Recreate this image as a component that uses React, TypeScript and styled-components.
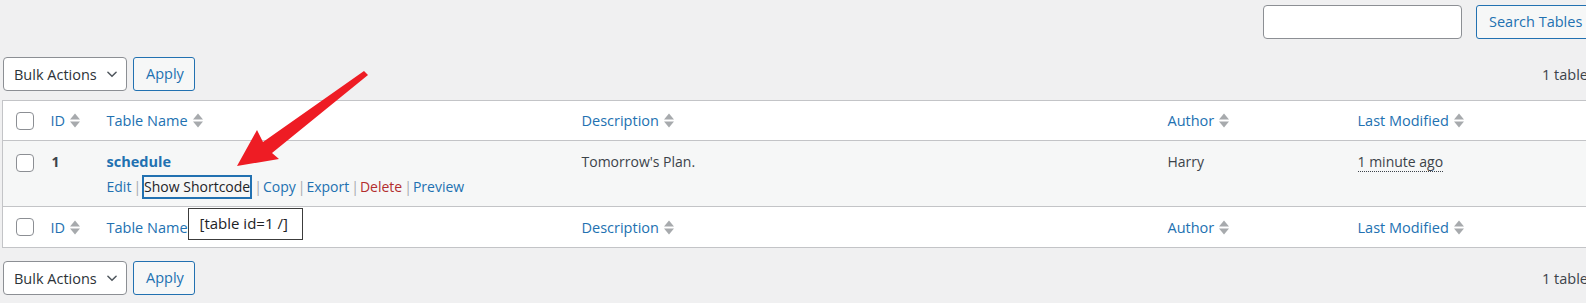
import React from "react";
import styled, { createGlobalStyle } from "styled-components";

const Global = createGlobalStyle`
  html, body { margin: 0; padding: 0; background: #f0f0f1; overflow: hidden; }
  body { font-family: "Open Sans", "Noto Sans", sans-serif; font-size: 14px; color: #3c434a; }
  * { box-sizing: border-box; }
`;

const Page = styled.div`
  position: relative;
  width: 1600px;
  padding: 5px 0 0 2px;
`;

const SearchBar = styled.div`
  display: flex;
  justify-content: flex-end;
  align-items: center;
  gap: 14px;
  height: 34px;
`;

const SearchInput = styled.div`
  width: 199px;
  height: 34px;
  background: #fff;
  border: 1px solid #8c8f94;
  border-radius: 4px;
`;

const Button = styled.button<{ $w?: number }>`
  height: 34px;
  width: ${(p) => (p.$w ? `${p.$w}px` : "auto")};
  padding: 0 12px;
  background: #f6f7f7;
  border: 1px solid #2271b1;
  border-radius: 3px;
  color: #2271b1;
  font-family: inherit;
  font-size: 14.5px;
  line-height: 32px;
  white-space: nowrap;
  text-align: left;
`;

const Nav = styled.div<{ $top: number }>`
  display: flex;
  align-items: center;
  gap: 6px;
  height: 34px;
  margin-top: ${(p) => p.$top}px;
  padding-left: 1px;
`;

const Select = styled.div`
  display: flex;
  align-items: center;
  justify-content: space-between;
  width: 124px;
  height: 34px;
  padding: 0 7px 0 10px;
  background: #fff;
  border: 1px solid #8c8f94;
  border-radius: 4px;
  color: #2c3338;
  font-size: 14.5px;
`;

const Count = styled.span`
  margin-left: auto;
  padding-right: 12px;
  color: #3c434a;
  font-size: 14.5px;
`;

const Table = styled.table`
  width: 1598px;
  margin-top: 9px;
  border-collapse: collapse;
  table-layout: fixed;
  border: 1px solid #c3c4c7;
`;

const HeadRow = styled.tr<{ $h: number }>`
  background: #fff;
  height: ${(p) => p.$h}px;
  border-bottom: 1px solid #c3c4c7;
`;

const BodyRow = styled.tr`
  background: #f6f7f7;
  height: 66px;
  border-bottom: 1px solid #c3c4c7;
`;

const Th = styled.th<{ $pl?: number }>`
  padding: 0 0 0 ${(p) => p.$pl ?? 10}px;
  text-align: left;
  font-weight: 400;
  font-size: 14.5px;
  vertical-align: middle;
`;

const Td = styled.td<{ $pl?: number }>`
  padding: 10px 0 0 ${(p) => p.$pl ?? 10}px;
  vertical-align: top;
  line-height: 22px;
`;

const Checkbox = styled.span<{ $mt?: number }>`
  display: block;
  width: 18px;
  height: 18px;
  margin-top: ${(p) => p.$mt ?? 0}px;
  background: #fff;
  border: 1px solid #8c8f94;
  border-radius: 4px;
`;

const SortLink = styled.span`
  display: inline-flex;
  align-items: center;
  gap: 5px;
  color: #2271b1;
`;

const Id = styled.strong`
  display: block;
  color: #3c434a;
  font-weight: 700;
  padding-left: 1px;
`;

const Title = styled.strong`
  display: block;
  color: #2271b1;
  font-weight: 700;
  font-size: 14.5px;
`;

const Actions = styled.div`
  position: relative;
  display: flex;
  align-items: center;
  margin-top: 2px;
  white-space: nowrap;
`;

const Act = styled.span<{ $danger?: boolean }>`
  color: ${(p) => (p.$danger ? "#b32d2e" : "#2271b1")};
`;

const FocusAct = styled.span`
  display: inline-block;
  height: 24px;
  line-height: 20px;
  padding: 0;
  border: 2px solid #2271b1;
  color: #1d2327;
`;

const Sep = styled.span`
  color: #a7aaad;
  padding: 0 1px 0 2px;
`;

const Abbr = styled.span`
  border-bottom: 1px dotted #3c434a;
  line-height: 18px;
  display: inline-block;
`;

const Tooltip = styled.div`
  position: absolute;
  left: 81px;
  top: 33px;
  width: 115px;
  height: 32px;
  padding: 0 0 0 11px;
  background: #fff;
  border: 1px solid #3c3c3c;
  color: #1d2327;
  font-size: 15px;
  line-height: 29px;
  z-index: 2;
`;

const ArrowLayer = styled.svg`
  position: absolute;
  left: 0;
  top: 0;
  pointer-events: none;
  z-index: 3;
`;

const SortIcon = () => (
  <svg width="10" height="17" viewBox="0 0 10 17">
    <polygon points="0,7.5 5,1.5 10,7.5" fill="#a7aaad" />
    <polygon points="0,9.5 10,9.5 5,15.5" fill="#a7aaad" />
  </svg>
);

const Chevron = () => (
  <svg width="14" height="14" viewBox="0 0 24 24" fill="none" stroke="#50575e" strokeWidth="2.6" strokeLinecap="round" strokeLinejoin="round">
    <path d="M5 9l7 7 7-7" />
  </svg>
);

const Header = ({ h }: { h: number }) => (
  <HeadRow $h={h}>
    <Th $pl={13}><Checkbox /></Th>
    <Th><SortLink>ID <SortIcon /></SortLink></Th>
    <Th><SortLink>Table Name <SortIcon /></SortLink></Th>
    <Th><SortLink>Description <SortIcon /></SortLink></Th>
    <Th><SortLink>Author <SortIcon /></SortLink></Th>
    <Th><SortLink>Last Modified <SortIcon /></SortLink></Th>
  </HeadRow>
);

const NavBar = ({ top }: { top: number }) => (
  <Nav $top={top}>
    <Select>
      <span>Bulk Actions</span>
      <Chevron />
    </Select>
    <Button $w={62}>Apply</Button>
    <Count>1 table</Count>
  </Nav>
);

export default function App() {
  return (
    <>
      <Global />
      <Page>
        <SearchBar>
          <SearchInput />
          <Button $w={124}>Search Tables</Button>
        </SearchBar>
        <NavBar top={18} />
        <Table>
          <colgroup>
            <col style={{ width: 38 }} />
            <col style={{ width: 56 }} />
            <col style={{ width: 475 }} />
            <col style={{ width: 586 }} />
            <col style={{ width: 190 }} />
            <col />
          </colgroup>
          <thead>
            <Header h={40} />
          </thead>
          <tbody>
            <BodyRow>
              <Td $pl={13}><Checkbox $mt={3} /></Td>
              <Td><Id>1</Id></Td>
              <Td>
                <Title>schedule</Title>
                <Actions>
                  <Act>Edit</Act>
                  <Sep>|</Sep>
                  <FocusAct>Show Shortcode</FocusAct>
                  <Sep>|</Sep>
                  <Act>Copy</Act>
                  <Sep>|</Sep>
                  <Act>Export</Act>
                  <Sep>|</Sep>
                  <Act $danger>Delete</Act>
                  <Sep>|</Sep>
                  <Act>Preview</Act>
                  <Tooltip>[table id=1 /]</Tooltip>
                </Actions>
              </Td>
              <Td>Tomorrow's Plan.</Td>
              <Td>Harry</Td>
              <Td><Abbr>1 minute ago</Abbr></Td>
            </BodyRow>
          </tbody>
          <tfoot>
            <Header h={41} />
          </tfoot>
        </Table>
        <NavBar top={13} />
        <ArrowLayer width="1586" height="303" viewBox="0 0 1586 303">
          <polygon
            points="237,166 257,130 263,142 364,71 368,75 272,153 279,159"
            fill="#ee1c24"
          />
        </ArrowLayer>
      </Page>
    </>
  );
}
